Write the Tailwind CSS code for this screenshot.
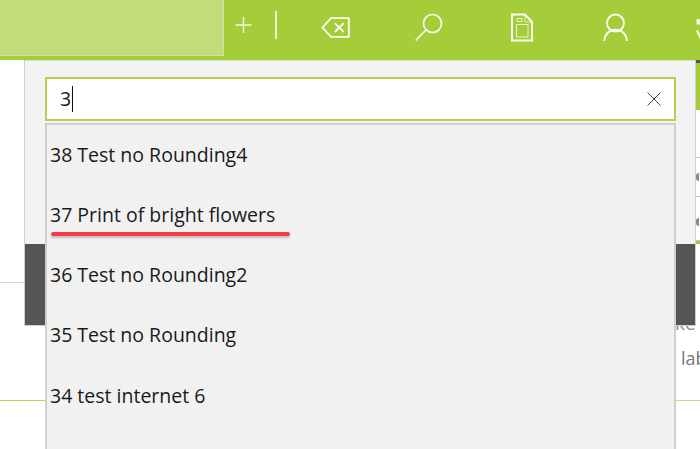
<!doctype html>
<html>
<head>
<meta charset="utf-8">
<script src="https://cdn.jsdelivr.net/npm/@tailwindcss/browser@4"></script>
</head>
<body class="m-0 bg-white">
<div class="relative w-[700px] h-[449px] overflow-hidden bg-white font-['Open_Sans','Noto_Sans',sans-serif] text-[#1a1a1a]">
  <header class="flex h-[60px] bg-[#a5cd39] overflow-hidden">
    <div class="w-[224px] h-[56px] shrink-0 bg-[#c1dc78] border-r border-b border-[#d3e0ae]"></div>
    <nav class="flex items-start pt-[10px] shrink-0">
      <svg class="ml-[8px] w-[22px] h-[34px]" viewBox="0 0 22 34" fill="none" stroke="#f2f7e0" stroke-width="1.4"><path d="M3.5 15H19.5M11.5 7V23"/></svg>
      <span class="ml-[21px] mt-[1px] w-[2px] h-[28px] bg-[#eef5d5]"></span>
      <svg class="ml-[41px] w-[36px] h-[34px]" viewBox="0 0 36 34" fill="none" stroke="#fbfdf3" stroke-width="1.8"><path d="M4.5 17.5L13 8.2H30.8V26.8H13Z"/><path d="M16.8 13.2L25.8 22M25.8 13.2L16.8 22"/></svg>
      <svg class="ml-[56px] w-[40px] h-[34px]" viewBox="0 0 40 34" fill="none" stroke="#fbfdf3" stroke-width="1.7"><circle cx="22.5" cy="13.5" r="9"/><path d="M16 20L5.7 30.5"/></svg>
      <svg class="ml-[55px] w-[34px] h-[34px]" viewBox="0 0 34 34" fill="none" stroke="#fbfdf3"><path stroke-width="2" d="M7 4.5H20L27 12V30.5H7Z"/><path stroke-width="1" d="M12 8.5H17V11.5H12Z" opacity=".8"/><path stroke-width="1" d="M11.5 14.5H23V27H11.5Z" opacity=".8"/><path stroke-width="1" d="M20 5V12H27" opacity=".7"/></svg>
      <svg class="ml-[59px] w-[36px] h-[34px]" viewBox="0 0 36 34" fill="none" stroke="#fbfdf3" stroke-width="1.8"><circle cx="17.5" cy="13" r="8.5"/><path d="M6.3 31A11.3 11.3 0 0 1 28.9 31"/></svg>
      <svg class="ml-[58px] w-[12px] h-[34px]" viewBox="0 0 12 34" fill="none" stroke="#fbfdf3" stroke-width="1.8"><path d="M5.5 13.5L9 8.5H14M5.5 9V13.5H10"/><path d="M5 20.5L8 27L12 24"/></svg>
    </nav>
  </header>

  <div class="absolute left-0 top-[282px] w-[25px] h-px bg-[#d6d6d6]"></div>
  <div class="absolute left-0 top-[400px] w-[46px] h-px bg-[#b4d556]"></div>
  <div class="absolute left-[675px] top-[400px] w-[25px] h-px bg-[#c3dc80]"></div>
  <div class="absolute left-[675px] top-[311px] text-[19px] leading-[24px] text-[#8a8a8a]">ke</div>
  <div class="absolute left-[681px] top-[346px] text-[18px] leading-[24px] text-[#777]">lab</div>

  <div class="absolute left-[696px] top-[60px] w-[4px] h-[190px] overflow-hidden bg-white">
    <div class="h-[3px] bg-[#555]"></div>
    <div class="h-[47px] bg-[#a5cd39]"></div>
    <div class="mt-[47px] h-px bg-[#c4c4c4]"></div>
    <div class="mt-[15px] h-[8px] w-[3px] rounded-l-full bg-[#8a8a8a]"></div>
    <div class="mt-[15px] h-px bg-[#c4c4c4]"></div>
    <div class="mt-[21px] h-[8px] w-[3px] rounded-l-full bg-[#8a8a8a]"></div>
    <div class="mt-[14px] h-px bg-[#c4c4c4]"></div>
  </div>
  <div class="absolute left-[696px] top-[241px] w-[4px] h-[3px] bg-[#a5cd39]"></div>

  <section class="absolute left-[24px] top-[60px] w-[672px] h-[266px] border border-[#cfcfcf] border-t-[#d6dfc0] bg-[#f3f3f3]">
    <div class="absolute left-0 right-0 top-[183px] bottom-0 bg-[#555555]"></div>
    <div class="absolute left-[20px] top-[16px] w-[631px] h-[44px] flex items-center justify-between border-2 border-[#afd24f] bg-white pl-[13px] pr-[12px]">
      <div class="flex items-center text-[19.5px] leading-[24px]">3<span class="ml-[1px] w-px h-[26px] bg-[#111]"></span></div>
      <svg class="w-[16px] h-[16px]" viewBox="0 0 16 16" fill="none" stroke="#444" stroke-width="1"><path d="M1.5 1.5L14.5 14.5M14.5 1.5L1.5 14.5"/></svg>
    </div>
  </section>

  <ul class="absolute left-[45px] top-[123px] w-[631px] h-[340px] border-2 border-[#d0d0d0] bg-[#f1f1f1] pl-[3px] text-[19.5px] text-[#1a1a1a] list-none overflow-hidden">
    <li class="h-[59.25px] flex items-center">38 Test no Rounding4</li>
    <li class="relative h-[60.25px] flex items-center">37 Print of bright flowers
      <span class="absolute left-[1px] top-[48px] w-[239px] h-[3.5px] rounded-full bg-[#f63c46] shadow-[0_2px_2px_rgba(0,0,0,0.2)]"></span>
    </li>
    <li class="h-[60.25px] flex items-center">36 Test no Rounding2</li>
    <li class="h-[60.25px] flex items-center">35 Test no Rounding</li>
    <li class="h-[60.25px] flex items-center">34 test internet 6</li>
    <li class="h-[60.25px] flex items-center">33 test internet 5</li>
  </ul>
</div>
</body>
</html>
